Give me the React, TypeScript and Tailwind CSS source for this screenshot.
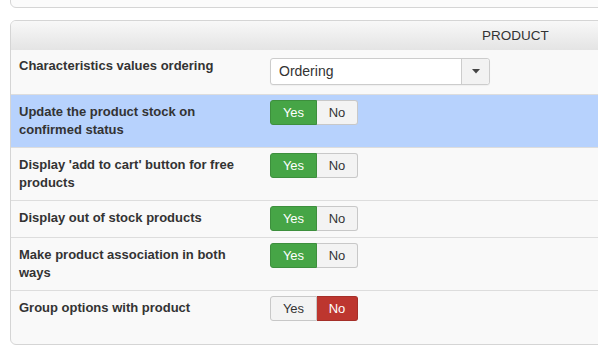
const rows = [
  { label: "Update the product stock on confirmed status", value: true, highlight: true },
  { label: "Display 'add to cart' button for free products", value: true },
  { label: "Display out of stock products", value: true },
  { label: "Make product association in both ways", value: true },
  { label: "Group options with product", value: false },
];

const YesNo = ({ value }: { value: boolean }) => {
  return (
    <div className="flex h-[25px] text-[13px] leading-none">
      <div
        className={
          value
            ? "w-[47px] flex items-center justify-center rounded-l-[3px] border border-[#3d8f3d] bg-[#46a546] text-white"
            : "w-[47px] flex items-center justify-center rounded-l-[3px] border border-[#c8c8c8] bg-[#f3f3f3] text-[#333]"
        }
      >
        Yes
      </div>
      <div
        className={
          value
            ? "w-[41px] flex items-center justify-center rounded-r-[3px] border border-l-0 border-[#c8c8c8] bg-[#f3f3f3] text-[#333]"
            : "w-[41px] flex items-center justify-center rounded-r-[3px] border border-l-0 border-[#a52f29] bg-[#bd362f] text-white"
        }
      >
        No
      </div>
    </div>
  );
};

const App = () => {
  return (
    <div className="w-[598px] h-[355px] overflow-hidden bg-white pl-[10px] text-[#333]" style={{ fontFamily: '"Liberation Sans", Arial, sans-serif' }}>
      {/* end of previous panel */}
      <div className="-mt-[20px] h-[28px] w-[640px] rounded-b-[6px] border border-[#d5d5d5] bg-[#fbfbfb]" />

      <div className="mt-[12px] w-[640px] rounded-[6px] border border-[#d5d5d5] bg-[#f9f9f9] overflow-hidden">
        <div className="h-[29px] bg-gradient-to-b from-[#f8f8f8] to-[#e4e4e4] pl-[471px] pt-[6px] text-[13.5px] leading-[17px] uppercase">
          Product
        </div>

        <div className="flex pt-[8px] pb-[9px] pl-[8px]">
          <div className="w-[240px] mr-[11px] text-[13px] font-bold leading-[18px] -mt-[1px]">
            Characteristics values ordering
          </div>
          <div className="flex h-[27px] w-[220px] rounded-[3px] border border-[#cccccc] bg-white shadow-[0_1px_1px_rgba(0,0,0,0.04)]">
            <div className="flex-1 flex items-center pl-[8px] text-[14px]">Ordering</div>
            <div className="w-[28px] flex items-center justify-center border-l border-[#cccccc] bg-[#f2f2f2] rounded-r-[3px]">
              <svg width="8" height="5" viewBox="0 0 8 5">
                <path d="M0 0h8L4 4.5z" fill="#444" />
              </svg>
            </div>
          </div>
        </div>

        {rows.map((row) => (
          <div
            key={row.label}
            className={
              row.highlight
                ? "flex border-t border-[#dddddd] bg-[#b7d2fd] pt-[5px] pb-[6px] pl-[8px]"
                : "flex border-t border-[#dddddd] pt-[5px] pb-[6px] pl-[8px]"
            }
          >
            <div className="w-[240px] mr-[11px] pt-[3px] pb-[2px] text-[13px] font-bold leading-[18px]">{row.label}</div>
            <YesNo value={row.value} />
          </div>
        ))}
        <div className="h-[17px]" />
      </div>
    </div>
  );
};

export default App;
